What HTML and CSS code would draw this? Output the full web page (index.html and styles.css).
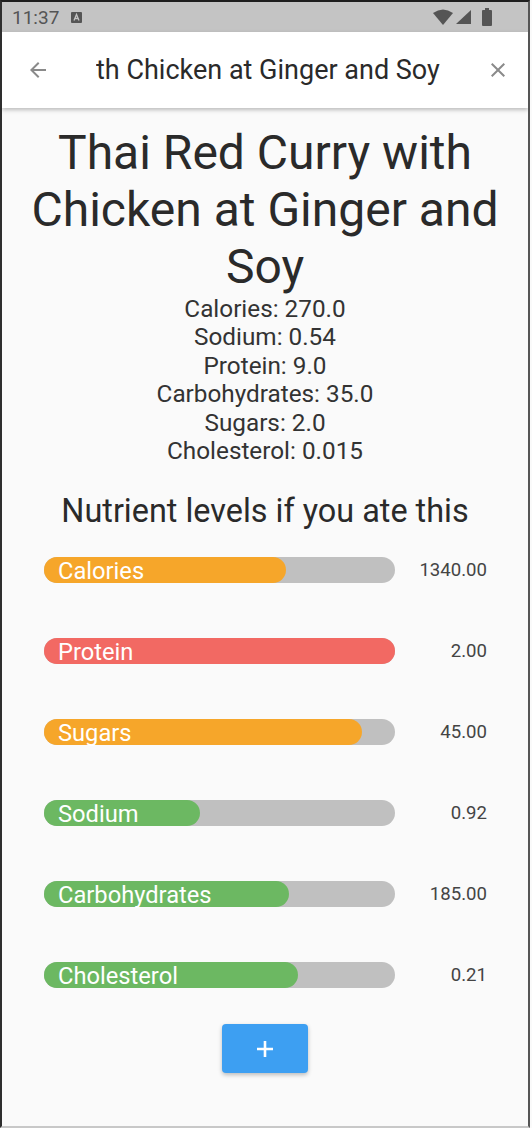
FILE: index.html
```html
<!DOCTYPE html>
<html lang="en">
<head>
  <meta charset="UTF-8">
  <meta name="viewport" content="width=device-width, initial-scale=1.0">
  <title>Thai Red Curry with Chicken at Ginger and Soy</title>
  <link rel="stylesheet" href="styles.css">
</head>
<body>
  <div class="phone">

    <!-- Status bar -->
    <div class="status-bar">
      <span class="time">11:37</span>
      <svg class="notif" width="11" height="11" viewBox="0 0 11 11">
        <rect x="0" y="0" width="11" height="11" rx="1" fill="#555"/>
        <path d="M3 8.5 L5.5 2.5 L8 8.5 M4 6.5 H7" stroke="#c4c4c4" stroke-width="1.3" fill="none"/>
      </svg>
      <div class="status-icons">
        <svg width="20" height="16" viewBox="0 0 20 16">
          <path d="M0 4 Q10 -3 20 4 L10 16 Z" fill="#555"/>
        </svg>
        <svg width="15" height="14" viewBox="0 0 15 14">
          <path d="M15 0 V14 H0 Z" fill="#555"/>
        </svg>
        <svg width="10" height="18" viewBox="0 0 10 18">
          <rect x="3" y="0" width="4" height="2" fill="#555"/>
          <rect x="0" y="2" width="10" height="16" rx="1" fill="#555"/>
        </svg>
      </div>
    </div>

    <!-- App bar -->
    <div class="app-bar">
      <svg class="icon" width="24" height="24" viewBox="0 0 24 24">
        <path d="M20 11H7.83l5.59-5.59L12 4l-8 8 8 8 1.41-1.41L7.83 13H20v-2z" fill="#8a8a8a"/>
      </svg>
      <div class="app-title">th Chicken at Ginger and Soy</div>
      <svg class="icon" width="24" height="24" viewBox="0 0 24 24">
        <path d="M19 6.41L17.59 5 12 10.59 6.41 5 5 6.41 10.59 12 5 17.59 6.41 19 12 13.41 17.59 19 19 17.59 13.41 12z" fill="#8a8a8a"/>
      </svg>
    </div>

    <div class="content">
      <h1>Thai Red Curry with Chicken at Ginger and Soy</h1>

      <div class="facts">
        <div>Calories: 270.0</div>
        <div>Sodium: 0.54</div>
        <div>Protein: 9.0</div>
        <div>Carbohydrates: 35.0</div>
        <div>Sugars: 2.0</div>
        <div>Cholesterol: 0.015</div>
      </div>

      <h2>Nutrient levels if you ate this</h2>

      <div class="levels">
        <div class="level">
          <div class="bar">
            <div class="fill orange" style="width: 69%"></div>
            <span class="label">Calories</span>
          </div>
          <span class="value">1340.00</span>
        </div>
        <div class="level">
          <div class="bar">
            <div class="fill red" style="width: 100%"></div>
            <span class="label">Protein</span>
          </div>
          <span class="value">2.00</span>
        </div>
        <div class="level">
          <div class="bar">
            <div class="fill orange" style="width: 90.6%"></div>
            <span class="label">Sugars</span>
          </div>
          <span class="value">45.00</span>
        </div>
        <div class="level">
          <div class="bar">
            <div class="fill green" style="width: 44.5%"></div>
            <span class="label">Sodium</span>
          </div>
          <span class="value">0.92</span>
        </div>
        <div class="level">
          <div class="bar">
            <div class="fill green" style="width: 69.8%"></div>
            <span class="label">Carbohydrates</span>
          </div>
          <span class="value">185.00</span>
        </div>
        <div class="level">
          <div class="bar">
            <div class="fill green" style="width: 72.4%"></div>
            <span class="label">Cholesterol</span>
          </div>
          <span class="value">0.21</span>
        </div>
      </div>

      <button type="button" class="add-button">
        <svg width="20" height="20" viewBox="0 0 20 20">
          <path d="M10 2 V18 M2 10 H18" stroke="#fff" stroke-width="2.6"/>
        </svg>
      </button>
    </div>
  </div>
</body>
</html>
```

FILE: styles.css
```css
html, body {
  margin: 0;
  padding: 0;
}
body {
  font-family: Roboto, "Liberation Sans", sans-serif;
  background-color: #fafafa;
}
.phone {
  box-sizing: border-box;
  width: 530px;
  height: 1128px;
  border-top: 2px solid #1e1e1e;
  border-left: 2px solid #2e2e2e;
  border-right: 2px solid #555;
  border-bottom: 2px solid #c8c8c8;
  background-color: #fafafa;
  overflow: hidden;
}
.status-bar {
  display: flex;
  align-items: center;
  height: 30px;
  padding: 0 0 0 10px;
  background-color: #c4c4c4;
  color: #555;
}
.time {
  font-size: 19px;
  margin-right: 12px;
}
.status-icons {
  margin-left: auto;
  margin-right: 36px;
  display: flex;
  align-items: center;
  gap: 3px;
}
.status-icons svg:last-child {
  margin-left: 8px;
}
.app-bar {
  position: relative;
  display: flex;
  align-items: center;
  height: 76px;
  padding: 0 18px 0 24px;
  background-color: #fff;
  box-shadow: 0 2px 4px rgba(0, 0, 0, 0.25);
}
.app-title {
  flex: 1;
  margin-left: 46px;
  font-size: 27px;
  line-height: 36px;
  color: #2a2a2a;
  white-space: nowrap;
  overflow: hidden;
}
.content {
  padding: 16px 14px 0;
  text-align: center;
  color: #2a2a2a;
}
h1 {
  margin: 0;
  font-size: 48px;
  font-weight: 400;
  line-height: 57px;
}
.facts {
  font-size: 24.3px;
  line-height: 28.4px;
  color: #333;
}
h2 {
  margin: 29px 0 0;
  font-size: 32.4px;
  font-weight: 400;
  line-height: 35px;
}
.levels {
  margin-top: 28px;
  padding: 0 27px 0 28px;
  display: flex;
  flex-direction: column;
  gap: 55px;
}
.level {
  display: grid;
  grid-template-columns: 351px 1fr;
  align-items: center;
}
.bar {
  position: relative;
  height: 26px;
  border-radius: 13px;
  background-color: #c0c0c0;
}
.fill {
  height: 100%;
  border-radius: 13px;
}
.orange { background-color: #f6a62a; }
.red { background-color: #f26963; }
.green { background-color: #6cb862; }
.label {
  position: absolute;
  left: 14px;
  top: 0;
  font-size: 23.7px;
  line-height: 28px;
  color: #fff;
}
.value {
  text-align: right;
  font-size: 18.6px;
  color: #444;
}
.add-button {
  display: block;
  margin: 36px auto 0;
  width: 86px;
  height: 49px;
  border: none;
  border-radius: 4px;
  background-color: #3d9ff2;
  box-shadow: 0 2px 4px rgba(0, 0, 0, 0.25);
  cursor: pointer;
}
.add-button svg {
  display: block;
  margin: 0 auto;
}
```
